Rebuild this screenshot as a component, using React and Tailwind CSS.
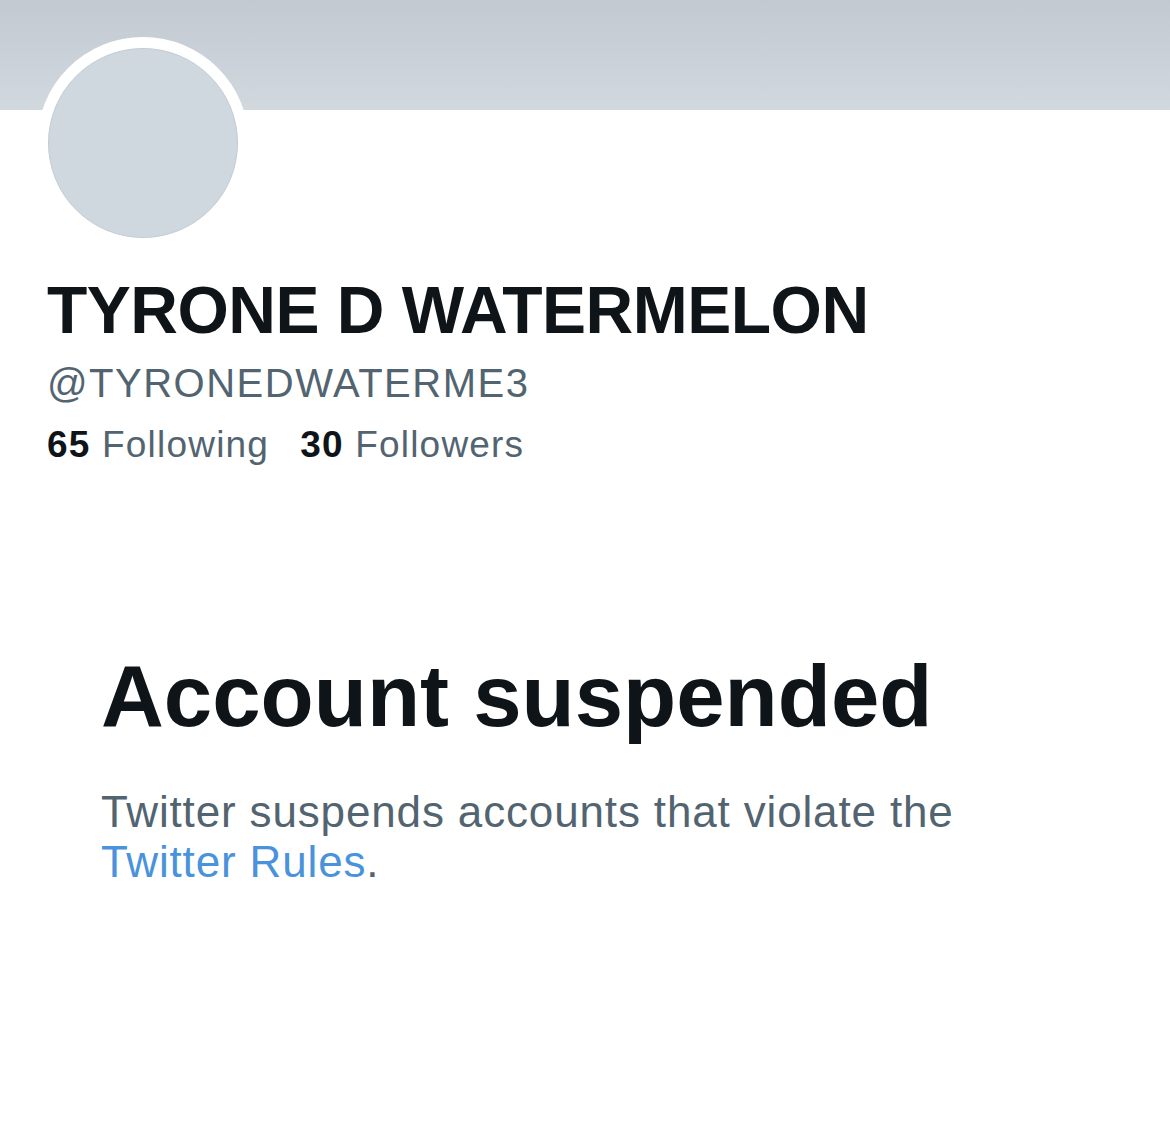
export default function App() {
  return (
    <div className="min-h-screen w-full bg-white font-['Liberation_Sans',Arial,sans-serif]">
      {/* Banner */}
      <div className="h-[110px] w-full bg-linear-to-b from-[#c2c9d1] to-[#d1d8de]" />

      {/* Profile header */}
      <div className="px-[47px]">
        <div className="relative -mt-[73px] -ml-[10px] h-[212px] w-[212px] rounded-full bg-white p-[11px]">
          <div className="h-full w-full rounded-full border border-[#c4cbd2] bg-[#d0d8df]" />
        </div>

        <h1 className="mt-[28px] text-[66px] leading-[66px] font-bold tracking-[-0.5px] text-[#0f1419]">
          TYRONE D WATERMELON
        </h1>
        <div className="mt-[20px] text-[40px] leading-[40px] tracking-[1.5px] text-[#536471]">
          @TYRONEDWATERME3
        </div>
        <div className="mt-[23px] flex items-baseline gap-[31px] text-[37px] leading-[37px] tracking-[1.2px]">
          <span>
            <span className="font-bold text-[#0f1419]">65</span>
            <span className="text-[#536471]"> Following</span>
          </span>
          <span>
            <span className="font-bold text-[#0f1419]">30</span>
            <span className="text-[#536471]"> Followers</span>
          </span>
        </div>
      </div>

      {/* Suspended notice */}
      <div className="mt-[189px] pl-[101px] pr-[60px]">
        <h2 className="text-[87px] leading-[87px] font-bold tracking-[0px] text-[#0f1419]">
          Account suspended
        </h2>
        <p className="mt-[48px] max-w-[920px] text-[44px] leading-[50px] tracking-[0.85px] text-[#536471]">
          Twitter suspends accounts that violate the{' '}
          <br />
          <a href="#" className="text-[#4a92db]">
            Twitter Rules
          </a>
          .
        </p>
      </div>
    </div>
  );
}
